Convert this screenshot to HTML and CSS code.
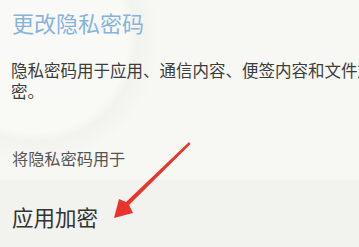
FILE: index.html
```html
<!DOCTYPE html>
<html lang="zh">
<head>
<meta charset="utf-8">
<link rel="stylesheet" href="styles.css">
</head>
<body>
<div class="page">
  <div class="top">
    <h1 class="title">更改隐私密码</h1>
    <p class="desc">隐私密码用于应用、通信内容、便签内容和文件加密。</p>
    <p class="label">将隐私密码用于</p>
  </div>
  <div class="band">
    <div class="item">应用加密</div>
  </div>
  <svg class="arrow" width="359" height="247" viewBox="0 0 359 247">
    <polygon points="189,142 190.5,144 129,205 133,213 114,218 119,199 126,202" fill="#e8342c"/>
  </svg>
</div>
</body>
</html>
```
FILE: styles.css
```css
html, body {
  margin: 0;
  padding: 0;
  overflow: hidden;
}
body {
  width: 359px;
  height: 247px;
  font-family: "Noto Sans CJK SC", "Noto Sans", sans-serif;
  background: #f6f6f2;
}
.page {
  position: relative;
  width: 359px;
  height: 247px;
  overflow: hidden;
}
.top {
  height: 180px;
  padding: 7px 0 0 12px;
  box-sizing: border-box;
  background:
    radial-gradient(circle at 35px 40px, #f9f9f7 0, #f9f9f6 92px, #f2f2ee 102px, rgba(246,246,242,0) 125px),
    #f7f7f3;
}
.title {
  margin: 0;
  font-size: 22px;
  line-height: 30px;
  font-weight: 400;
  color: #86b4de;
}
.desc {
  margin: 23px 0 0 -1px;
  width: 372px;
  font-size: 16.5px;
  line-height: 21px;
  color: #3c3c3c;
}
.label {
  margin: 45px 0 0 0;
  font-size: 16.2px;
  line-height: 22px;
  color: #555;
}
.band {
  height: 67px;
  padding: 22px 0 0 12px;
  box-sizing: border-box;
  background: #f2f2ee;
}
.item {
  font-size: 21.5px;
  line-height: 30px;
  color: #333;
}
.arrow {
  position: absolute;
  left: 0;
  top: 0;
}
```
